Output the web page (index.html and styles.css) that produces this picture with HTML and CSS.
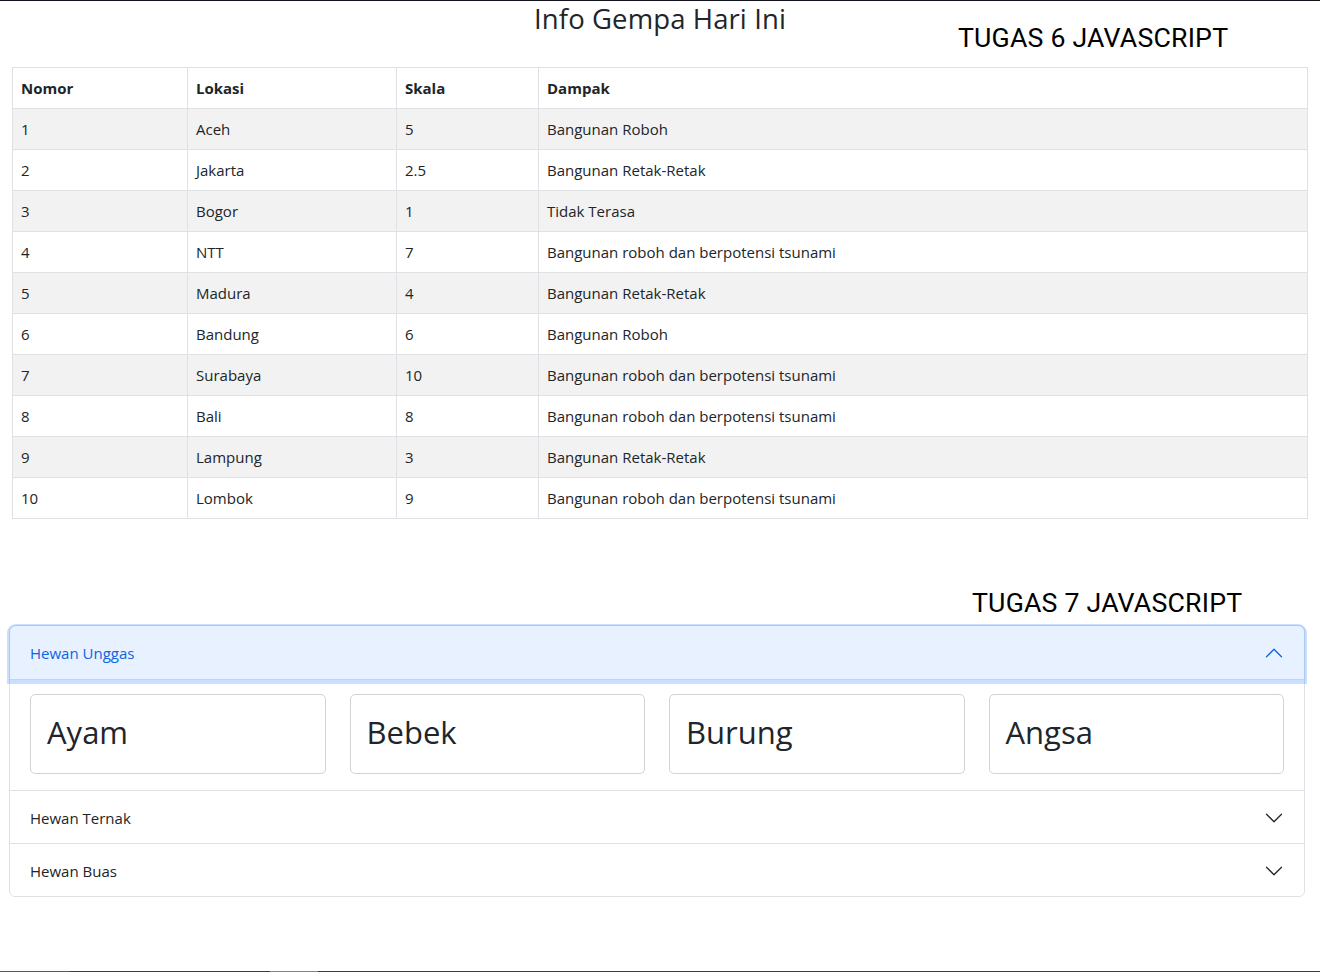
FILE: index.html
```html
<!DOCTYPE html>
<html lang="id">
<head>
<meta charset="utf-8">
<title>Info Gempa Hari Ini</title>
<link rel="stylesheet" href="styles.css">
</head>
<body>
<div class="page">
  <header class="page-head">
    <div></div>
    <h3 class="title">Info Gempa Hari Ini</h3>
    <div class="tugas tugas6">TUGAS 6 JAVASCRIPT</div>
  </header>

  <div class="table-wrap">
    <table class="gempa">
      <thead>
        <tr><th class="c1">Nomor</th><th class="c2">Lokasi</th><th class="c3">Skala</th><th>Dampak</th></tr>
      </thead>
      <tbody>
        <tr><td>1</td><td>Aceh</td><td>5</td><td>Bangunan Roboh</td></tr>
        <tr><td>2</td><td>Jakarta</td><td>2.5</td><td>Bangunan Retak-Retak</td></tr>
        <tr><td>3</td><td>Bogor</td><td>1</td><td>Tidak Terasa</td></tr>
        <tr><td>4</td><td>NTT</td><td>7</td><td>Bangunan roboh dan berpotensi tsunami</td></tr>
        <tr><td>5</td><td>Madura</td><td>4</td><td>Bangunan Retak-Retak</td></tr>
        <tr><td>6</td><td>Bandung</td><td>6</td><td>Bangunan Roboh</td></tr>
        <tr><td>7</td><td>Surabaya</td><td>10</td><td>Bangunan roboh dan berpotensi tsunami</td></tr>
        <tr><td>8</td><td>Bali</td><td>8</td><td>Bangunan roboh dan berpotensi tsunami</td></tr>
        <tr><td>9</td><td>Lampung</td><td>3</td><td>Bangunan Retak-Retak</td></tr>
        <tr><td>10</td><td>Lombok</td><td>9</td><td>Bangunan roboh dan berpotensi tsunami</td></tr>
      </tbody>
    </table>
  </div>

  <div class="tugas tugas7">TUGAS 7 JAVASCRIPT</div>

  <div class="accordion">
    <div class="acc-item">
      <button class="acc-btn active" type="button">
        <span>Hewan Unggas</span>
        <svg class="chev up" viewBox="0 0 16 16" width="20" height="20"><path fill="#0c63e4" fill-rule="evenodd" d="M1.646 4.646a.5.5 0 0 1 .708 0L8 10.293l5.646-5.647a.5.5 0 0 1 .708.708l-6 6a.5.5 0 0 1-.708 0l-6-6a.5.5 0 0 1 0-.708z"/></svg>
      </button>
      <div class="acc-body">
        <div class="card"><h1>Ayam</h1></div>
        <div class="card"><h1>Bebek</h1></div>
        <div class="card"><h1>Burung</h1></div>
        <div class="card"><h1>Angsa</h1></div>
      </div>
    </div>
    <div class="acc-item">
      <button class="acc-btn" type="button">
        <span>Hewan Ternak</span>
        <svg class="chev" viewBox="0 0 16 16" width="20" height="20"><path fill="#212529" fill-rule="evenodd" d="M1.646 4.646a.5.5 0 0 1 .708 0L8 10.293l5.646-5.647a.5.5 0 0 1 .708.708l-6 6a.5.5 0 0 1-.708 0l-6-6a.5.5 0 0 1 0-.708z"/></svg>
      </button>
    </div>
    <div class="acc-item">
      <button class="acc-btn" type="button">
        <span>Hewan Buas</span>
        <svg class="chev" viewBox="0 0 16 16" width="20" height="20"><path fill="#212529" fill-rule="evenodd" d="M1.646 4.646a.5.5 0 0 1 .708 0L8 10.293l5.646-5.647a.5.5 0 0 1 .708.708l-6 6a.5.5 0 0 1-.708 0l-6-6a.5.5 0 0 1 0-.708z"/></svg>
      </button>
    </div>
  </div>

  <div class="spacer"></div>
  <div class="bottom-bar">
    <span class="seg s1"></span><span class="seg s2"></span><span class="seg s3"></span><span class="seg s4"></span>
  </div>
</div>
</body>
</html>
```
FILE: styles.css
```css
* { box-sizing: border-box; }
html, body { margin: 0; padding: 0; }
body {
  font-family: "Open Sans", "Noto Sans", sans-serif;
  font-size: 15px;
  line-height: 24px;
  color: #212529;
  background: #fff;
}
.page {
  min-height: 972px;
  display: flex;
  flex-direction: column;
  border-top: 1px solid #12121c;
}
.page-head {
  display: grid;
  grid-template-columns: 1fr auto 1fr;
  height: 66px;
}
.title {
  margin: 0;
  padding-top: 2px;
  font-size: 27.5px;
  font-weight: 500;
  line-height: 32px;
  letter-spacing: 0.1px;
}
.tugas {
  font-family: Roboto, "Liberation Sans", sans-serif;
  font-size: 26.7px;
  line-height: 30px;
  color: #000;
  letter-spacing: 0.2px;
}
.tugas6 {
  padding-top: 22px;
  padding-left: 172px;
}
.table-wrap {
  padding: 0 12px;
}
.gempa {
  width: 100%;
  border-collapse: collapse;
  border: 1px solid #dee2e6;
}
.gempa th, .gempa td {
  border: 1px solid #dee2e6;
  padding: 8px 8px;
  height: 41px;
  text-align: left;
  vertical-align: top;
}
.gempa th { font-weight: 700; }
.gempa .c1 { width: 175px; }
.gempa .c2 { width: 209px; }
.gempa .c3 { width: 142px; }
.gempa tbody tr:nth-child(odd) td { background: #f2f2f2; }

.tugas7 {
  margin-top: 69px;
  padding-left: 972px;
  height: 37px;
}

.accordion {
  margin: 0 15px 0 9px;
  border: 1px solid #dee2e6;
  border-radius: 6px;
}
.acc-item + .acc-item { border-top: 1px solid #dee2e6; }
.acc-btn {
  width: 100%;
  display: flex;
  align-items: center;
  justify-content: space-between;
  border: 0;
  background: #fff;
  font: inherit;
  color: #212529;
  padding: 14px 20px 12px 20px;
  height: 52px;
  text-align: left;
  border-radius: 0 0 6px 6px;
}
.acc-item:nth-child(2) .acc-btn { border-radius: 0; }
.acc-btn.active {
  position: relative;
  z-index: 2;
  background: #e7f1ff;
  color: #0c63e4;
  height: 54px;
  padding-top: 12px;
  border-radius: 6px 6px 0 0;
  box-shadow: 0 1px 0 3px rgba(13,110,253,.22), inset 0 -1px 0 rgba(0,0,0,.125);
}
.chev { display: block; flex: none; }
.chev.up { transform: rotate(180deg); }
.acc-body {
  padding: 14px 20px 16px;
  display: grid;
  grid-template-columns: repeat(4, 1fr);
  gap: 24px;
}
.card {
  border: 1px solid #d3d3d3;
  border-radius: 5px;
  padding: 18px 16px 14px;
  height: 80px;
}
.card h1 {
  margin: 0;
  font-size: 31px;
  font-weight: 500;
  line-height: 38px;
  color: #212529;
}
.spacer { flex: 1; }
.bottom-bar {
  display: flex;
  height: 1px;
}
.seg { display: block; height: 1px; }
.s1 { width: 70px; background: #5a5a5a; }
.s2 { width: 200px; background: #3c3c3c; }
.s3 { width: 48px; background: #b07a45; }
.s4 { flex: 1; background: #3c3c3c; }
```
